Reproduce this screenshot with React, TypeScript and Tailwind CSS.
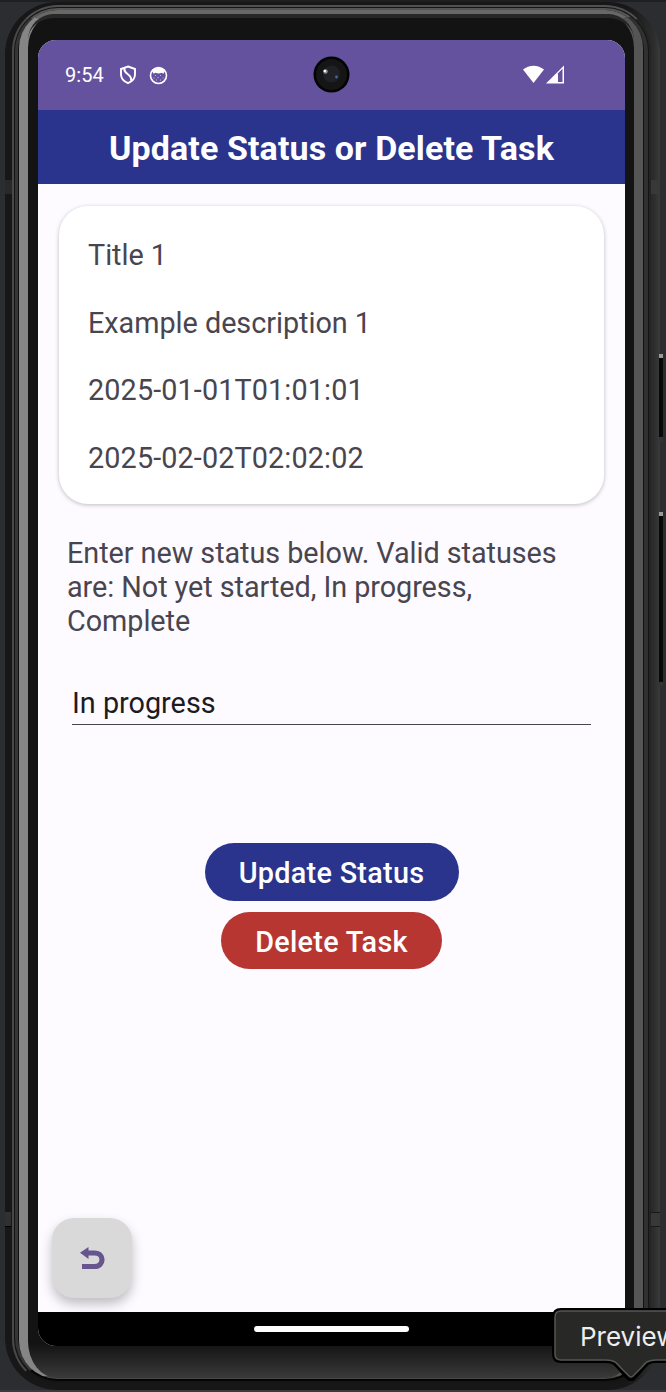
import React from 'react';

const details = ['Title 1', 'Example description 1'];
const dates = ['2025-01-01T01:01:01', '2025-02-02T02:02:02'];

function StatusBar() {
  return (
    <div className="relative flex h-[70px] shrink-0 items-center bg-[#65529e] pl-[27px] pr-[60px] text-white">
      <span className="w-[54px] text-[20px] leading-6 tracking-[0.1px]">9:54</span>
      <svg className="size-[20px]" viewBox="0 0 20 20" fill="none" stroke="currentColor" strokeWidth="1.900">
        <path d="M9 1.500 16 4v5.500c0 4.200-3 7-7 8.700-4-1.700-7-4.500-7-8.700V4z" />
        <path d="M5.300 3.200C4.500 10 13 8 12.200 15.800" strokeWidth="2" />
      </svg>
      <svg className="ml-[10px] size-[19px]" viewBox="0 0 19 19" fill="none">
        <circle cx="9.500" cy="9.500" r="8" stroke="white" strokeWidth="1.600" />
        <path d="M3 4.500 4.500 7.800l2-1c2 .8 4 .8 6 0l2 1 1.500-3.300A8.500 8.500 0 0 0 3 4.500Z" fill="white" />
        <path d="M6 9.500h1m4 0h1M4.500 12h1m3-.5h1m4 .5h1M7 14h1m3 0h1" stroke="#d8d0ed" strokeWidth=".8" />
      </svg>
      <div className="flex-1" />
      <svg className="h-[20px] w-[43px]" viewBox="0 0 43 20" fill="white">
        <path d="M1 4.600C7-.7 16-.7 22 4.600L11.500 18z" />
        <path d="M24 18.500 42 .5v18z" />
        <path d="M36 8.200 40.500 3.700v13.300H36z" fill="#65529e" />
      </svg>
      <svg className="absolute left-[275px] top-[16px] size-[37px]" viewBox="0 0 37 37">
        <circle cx="18.500" cy="18.500" r="18" fill="#020202" />
        <circle cx="18.500" cy="18.500" r="15.500" fill="#151516" />
        <circle cx="18.500" cy="18" r="8.500" fill="#202127" />
        <circle cx="12.500" cy="15.500" r="2.200" fill="#8f9293" />
        <circle cx="11.800" cy="15" r="1.200" fill="#fff" />
        <circle cx="23.500" cy="21" r="1.400" fill="#46699c" />
      </svg>
    </div>
  );
}

function Screen() {
  return (
    <div className="relative flex h-[1306px] w-[587px] flex-col overflow-hidden rounded-[18px] bg-[#fdfbff]">
      <StatusBar />
      <h1 className="flex h-[74px] shrink-0 items-center justify-center bg-[#2a348c] pt-[1px] text-[34px] font-bold leading-10 tracking-[0.1px] text-white">
        <span className="whitespace-nowrap">Update Status or Delete Task</span>
      </h1>
      <main className="flex min-h-0 flex-1 flex-col px-[21px] pt-[22px]">
        <section className="flex h-[298px] w-[545px] shrink-0 flex-col gap-[33.500px] rounded-[29px] bg-white pl-[29px] pt-[32px] text-[28.800px] leading-[34px] text-[#49454f] shadow-[0_1px_4px_rgba(0,0,0,0.25)]">
          {details.map((text) => <p key={text} className="tracking-[-0.03px]">{text}</p>)}
          {dates.map((text) => <p key={text} className="tracking-[0.11px]">{text}</p>)}
        </section>
        <p className="ml-[8px] mt-[33px] w-[520px] text-[28.800px] leading-[33.800px] tracking-[-0.05px] text-[#49454f]">
          Enter new status below. Valid statuses<br />are: Not yet started, In progress,<br />Complete
        </p>
        <input
          className="ml-[13px] mt-[45px] h-[42px] w-[519px] shrink-0 border-b-[1.500px] border-[#49454f] bg-transparent pb-[1px] text-[28.800px] text-[#1c1b1f] outline-none"
          defaultValue="In progress"
          aria-label="Status"
        />
        <div className="mt-[118px] flex flex-col items-center gap-[11px] text-[28.800px] font-medium leading-[34px] tracking-[0.28px] text-white">
          <button className="h-[58px] w-[254px] rounded-full bg-[#2a348c] pt-[2px]">Update Status</button>
          <button className="h-[57px] w-[221px] rounded-full bg-[#b73631] pt-[2px]">Delete Task</button>
        </div>
        <button className="-ml-[7px] mb-[14px] mt-auto flex size-[80px] items-center justify-center rounded-[22px] bg-[#d9d9d9] shadow-[0_6px_12px_rgba(0,0,0,0.25)]" aria-label="Back">
          <svg className="size-[28px]" viewBox="0 0 28 28" fill="none">
            <path d="M9 9h7.500C26.500 9 26.500 22.500 16.500 22.500H4" stroke="#67558e" strokeWidth="5.200" />
            <path d="M2 8.800 10.500 3v12z" fill="#67558e" />
          </svg>
        </button>
      </main>
      <div className="flex h-[34px] shrink-0 items-center justify-center bg-black">
        <span className="h-[6px] w-[155px] rounded-full bg-white" />
      </div>
    </div>
  );
}

export default function App() {
  return (
    <div className="relative h-[1392px] w-[666px] overflow-hidden border-t-2 border-[#1e1f22] bg-[#2b2d31] pl-[5px] pr-[6px] font-[Roboto,'Liberation_Sans',sans-serif]">
      <div className="h-[1388px] w-[655px] rounded-[52px] bg-[linear-gradient(90deg,#171717_0_95%,#2c2c2c_99%,#3a3a3a)] pb-[5px] pl-[7px] pr-[9px] pt-[3px]">
        <div className="size-full rounded-[46px] border-b-2 border-l-2 border-r-2 border-t-2 border-b-[#171717] border-l-[#484848] border-r-[#242424] border-t-[#505050] bg-[#151515] px-[1px] pb-[2px] pt-[1px]">
          <div className="size-full rounded-[43px] border-b-2 border-l-[3px] border-r-[4px] border-t-2 border-b-[#050505] border-l-[#353535] border-r-[#303030] border-t-[#555] bg-[#111] pl-[1px] pr-[1px]">
            <div className="size-full rounded-[38px] border-b border-l-[9px] border-r-[9px] border-t-4 border-b-[#484848] border-l-[#858585] border-r-[#555] border-t-[#686868] bg-[linear-gradient(180deg,#131313_0_97.500%,#3a3a3a)]">
              <div className="size-full rounded-t-[26px] border-t-4 border-[#272727] pl-[10px] pt-[22px]">
                <Screen />
              </div>
            </div>
          </div>
        </div>
      </div>
      <span className="absolute left-[5px] top-[178px] h-[14px] w-[7px] bg-[#292929]" />
      <span className="absolute left-[651px] top-[178px] h-[14px] w-[9px] bg-[#383838]" />
      <span className="absolute left-[5px] top-[1210px] h-[15px] w-[6px] border-b border-black bg-[#303030]" />
      <span className="absolute left-[651px] top-[1210px] h-[15px] w-[9px] border-y border-[#181818] bg-[#383838]" />
      <span className="absolute left-[659px] top-[352px] h-[87px] w-[4px] border-b-4 border-t-4 border-b-[#333] border-t-[#999] bg-[#080808]" />
      <span className="absolute left-[659px] top-[510px] h-[174px] w-[4px] border-b-4 border-t-4 border-b-[#333] border-t-[#999] bg-[#080808]" />
      <div className="absolute bottom-0 left-0 h-[2px] w-full bg-[#3d3a3f]" />
      <div className="absolute left-[552px] top-[1306px] h-[74px] w-[150px]">
        <svg className="absolute inset-0" width="150" height="74" viewBox="0 0 150 74">
          <path d="M9 2H145V53H104c-7 0-9 2-14 8l-7 8q-4 4-8 0l-7-8c-5-6-7-8-14-8H9q-7 0-7-7V9q0-7 7-7Z" fill="#282927" stroke="#000" strokeWidth="4" />
          <path d="M9 3H145V52H104c-8 0-10 2-15 8l-8 8q-2 2-4 0l-8-8c-5-6-7-8-15-8H9q-6 0-6-6V9q0-6 6-6Z" fill="#282927" stroke="#555654" strokeWidth="1.500" />
        </svg>
        <span className="absolute left-[28px] top-[12px] whitespace-nowrap font-[Inter,sans-serif] text-[26px] leading-[34px] text-[#eee]">Preview</span>
      </div>
    </div>
  );
}
